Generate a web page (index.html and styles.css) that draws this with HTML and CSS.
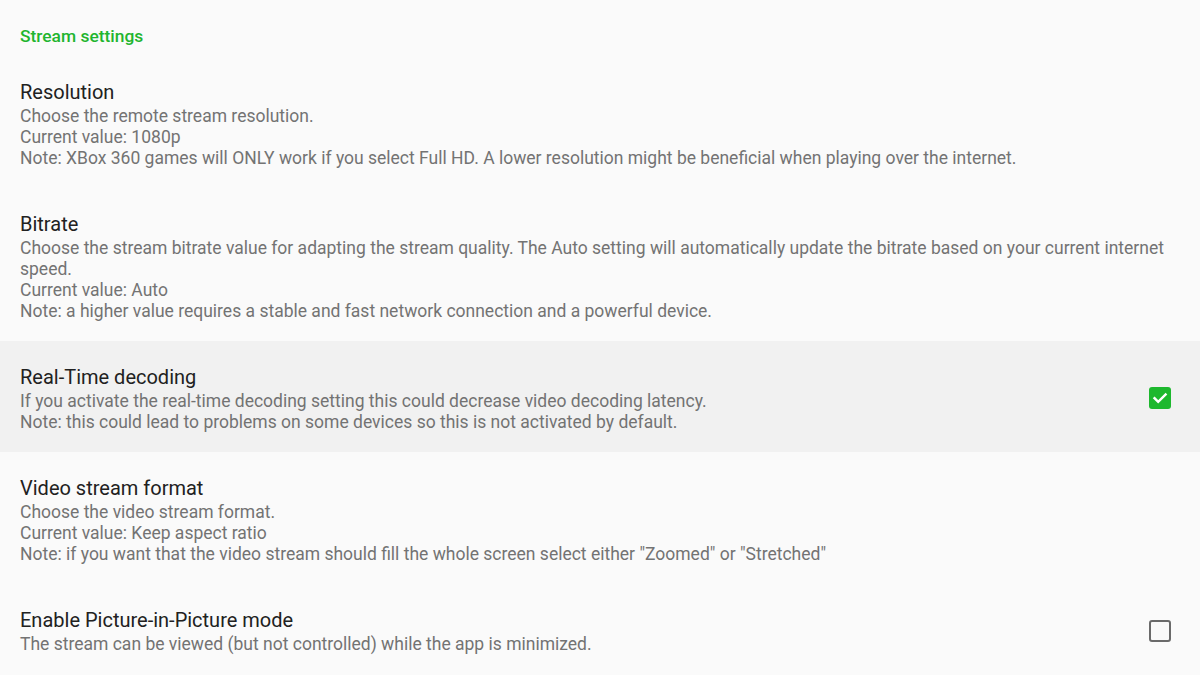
FILE: index.html
```html
<!DOCTYPE html>
<html>
<head>
<meta charset="utf-8">
<link rel="stylesheet" href="styles.css">
</head>
<body>
<div class="screen">
  <div class="category">Stream settings</div>

  <div class="pref">
    <div class="text">
      <div class="title">Resolution</div>
      <div class="summary">Choose the remote stream resolution.<br>Current value: 1080p<br>Note: XBox 360 games will ONLY work if you select Full HD. A lower resolution might be beneficial when playing over the internet.</div>
    </div>
  </div>

  <div class="pref">
    <div class="text">
      <div class="title">Bitrate</div>
      <div class="summary">Choose the stream bitrate value for adapting the stream quality. The Auto setting will automatically update the bitrate based on your current internet speed.<br>Current value: Auto<br>Note: a higher value requires a stable and fast network connection and a powerful device.</div>
    </div>
  </div>

  <div class="pref focused">
    <div class="text">
      <div class="title">Real-Time decoding</div>
      <div class="summary">If you activate the real-time decoding setting this could decrease video decoding latency.<br>Note: this could lead to problems on some devices so this is not activated by default.</div>
    </div>
    <div class="widget">
      <div class="checkbox checked">
        <svg viewBox="0 0 22 22" width="22" height="22"><path d="M5.5 11.2 L9.2 14.9 L16.6 7.5" fill="none" stroke="#ffffff" stroke-width="2.4" stroke-linecap="square"/></svg>
      </div>
    </div>
  </div>

  <div class="pref">
    <div class="text">
      <div class="title">Video stream format</div>
      <div class="summary">Choose the video stream format.<br>Current value: Keep aspect ratio<br>Note: if you want that the video stream should fill the whole screen select either "Zoomed" or "Stretched"</div>
    </div>
  </div>

  <div class="pref">
    <div class="text">
      <div class="title">Enable Picture-in-Picture mode</div>
      <div class="summary">The stream can be viewed (but not controlled) while the app is minimized.</div>
    </div>
    <div class="widget">
      <div class="checkbox"></div>
    </div>
  </div>
</div>
</body>
</html>
```

FILE: styles.css
```css
html, body {
  margin: 0;
  padding: 0;
  background: #fafafa;
}
.screen {
  width: 1200px;
  height: 675px;
  overflow: hidden;
  font-family: Roboto, "Noto Sans", sans-serif;
  background: #fafafa;
}
.category {
  height: 56px;
  box-sizing: border-box;
  padding: 24px 20px 0 20px;
  font-size: 17.4px;
  line-height: 24px;
  font-weight: 500;
  color: #1fb52f;
}
.pref {
  display: flex;
  align-items: center;
  padding: 22px 20px 19px 20px;
}
.pref.focused {
  background: #f1f1f1;
}
.text {
  flex: 1;
  min-width: 0;
}
.title {
  font-size: 20px;
  line-height: 28px;
  color: #212121;
}
.summary {
  font-size: 17.5px;
  line-height: 21px;
  color: #737373;
}
.widget {
  width: 60px;
  display: flex;
  justify-content: flex-end;
  padding-right: 9px;
}
.checkbox {
  width: 22px;
  height: 22px;
  box-sizing: border-box;
  border: 2.5px solid #6a6a6a;
  border-radius: 3px;
}
.checkbox.checked {
  border: none;
  background: #1db82e;
}
.checkbox svg {
  display: block;
}
```
